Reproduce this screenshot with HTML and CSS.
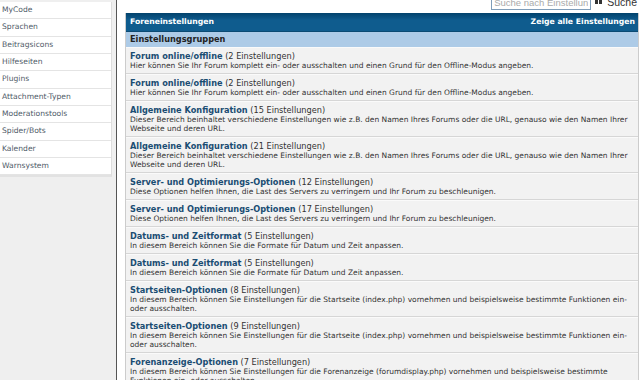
FILE: index.html
```html
<!DOCTYPE html>
<html lang="de">
<head>
    <meta charset="UTF-8">
    <title>Einstellungen</title>
    <link rel="stylesheet" href="styles.css">
</head>
<body>
    <div class="page">
        <!-- Left menu -->
        <div class="sidebar">
            <ul class="nav">
                <li>MyCode</li>
                <li>Sprachen</li>
                <li>Beitragsicons</li>
                <li>Hilfeseiten</li>
                <li>Plugins</li>
                <li>Attachment-Typen</li>
                <li>Moderationstools</li>
                <li>Spider/Bots</li>
                <li>Kalender</li>
                <li>Warnsystem</li>
            </ul>
        </div>

        <!-- Settings -->
        <div class="content">
            <div class="search">
                <input type="text" placeholder="Suche nach Einstellungen">
                <span class="search-btn"><svg width="8" height="6" viewBox="0 0 8 6"><rect x="0" y="1" width="3" height="4" fill="#333"/><rect x="4" y="1" width="3" height="4" fill="#333"/></svg><span>Suche</span></span>
            </div>

            <div class="box">
                <div class="box-head">
                    <span>Foreneinstellungen</span>
                    <span>Zeige alle Einstellungen</span>
                </div>
                <div class="box-sub">Einstellungsgruppen</div>

                <div class="row">
                    <div class="title"><b>Forum online/offline</b> (2 Einstellungen)</div>
                    <div class="desc">Hier können Sie Ihr Forum komplett ein- oder ausschalten und einen Grund für den Offline-Modus angeben.</div>
                </div>
                <div class="row">
                    <div class="title"><b>Forum online/offline</b> (2 Einstellungen)</div>
                    <div class="desc">Hier können Sie Ihr Forum komplett ein- oder ausschalten und einen Grund für den Offline-Modus angeben.</div>
                </div>
                <div class="row">
                    <div class="title"><b>Allgemeine Konfiguration</b> (15 Einstellungen)</div>
                    <div class="desc">Dieser Bereich beinhaltet verschiedene Einstellungen wie z.B. den Namen Ihres Forums oder die URL, genauso wie den Namen Ihrer<br>Webseite und deren URL.</div>
                </div>
                <div class="row">
                    <div class="title"><b>Allgemeine Konfiguration</b> (21 Einstellungen)</div>
                    <div class="desc">Dieser Bereich beinhaltet verschiedene Einstellungen wie z.B. den Namen Ihres Forums oder die URL, genauso wie den Namen Ihrer<br>Webseite und deren URL.</div>
                </div>
                <div class="row">
                    <div class="title"><b>Server- und Optimierungs-Optionen</b> (12 Einstellungen)</div>
                    <div class="desc">Diese Optionen helfen Ihnen, die Last des Servers zu verringern und Ihr Forum zu beschleunigen.</div>
                </div>
                <div class="row">
                    <div class="title"><b>Server- und Optimierungs-Optionen</b> (17 Einstellungen)</div>
                    <div class="desc">Diese Optionen helfen Ihnen, die Last des Servers zu verringern und Ihr Forum zu beschleunigen.</div>
                </div>
                <div class="row">
                    <div class="title"><b>Datums- und Zeitformat</b> (5 Einstellungen)</div>
                    <div class="desc">In diesem Bereich können Sie die Formate für Datum und Zeit anpassen.</div>
                </div>
                <div class="row">
                    <div class="title"><b>Datums- und Zeitformat</b> (5 Einstellungen)</div>
                    <div class="desc">In diesem Bereich können Sie die Formate für Datum und Zeit anpassen.</div>
                </div>
                <div class="row">
                    <div class="title"><b>Startseiten-Optionen</b> (8 Einstellungen)</div>
                    <div class="desc">In diesem Bereich können Sie Einstellungen für die Startseite (index.php) vornehmen und beispielsweise bestimmte Funktionen ein-<br>oder ausschalten.</div>
                </div>
                <div class="row">
                    <div class="title"><b>Startseiten-Optionen</b> (9 Einstellungen)</div>
                    <div class="desc">In diesem Bereich können Sie Einstellungen für die Startseite (index.php) vornehmen und beispielsweise bestimmte Funktionen ein-<br>oder ausschalten.</div>
                </div>
                <div class="row">
                    <div class="title"><b>Forenanzeige-Optionen</b> (7 Einstellungen)</div>
                    <div class="desc">In diesem Bereich können Sie Einstellungen für die Forenanzeige (forumdisplay.php) vornehmen und beispielsweise bestimmte<br>Funktionen ein- oder ausschalten.</div>
                </div>
            </div>
        </div>
    </div>
</body>
</html>
```

FILE: styles.css
```css
body {
    margin: 0;
    padding: 0;
    font-family: "DejaVu Sans", Verdana, sans-serif;
    background-color: #ffffff;
    color: #333;
    overflow: hidden;
}

.page {
    display: flex;
    height: 380px;
    overflow: hidden;
}

.sidebar {
    width: 116px;
    flex-shrink: 0;
    background-color: #efefef;
    border-right: 1px solid #555;
}

.nav {
    list-style: none;
    margin: 2px 4px 0 0;
    padding: 0;
    background-color: #fff;
    border-right: 1px solid #ddd;
    border-bottom: 2px solid #e2e2e2;
}

.nav li {
    height: 16.35px;
    line-height: 16.35px;
    padding-left: 2px;
    font-size: 7.6px;
    color: #4f5b68;
    border-bottom: 1px solid #e4e4e4;
}

.content {
    flex: 1;
    min-width: 0;
    padding: 0 1px 0 8px;
}

.search {
    display: flex;
    justify-content: flex-end;
    align-items: flex-start;
    height: 13px;
    padding-right: 2px;
}

.search input {
    width: 94px;
    height: 14px;
    margin-top: -6px;
    padding: 0 2px;
    border: 1px solid #7f9db9;
    font-family: "Liberation Sans", Arial, sans-serif;
    font-size: 9.5px;
}

.search input::placeholder {
    color: #aaa;
}

.search-btn {
    display: flex;
    align-items: center;
    gap: 4px;
    margin-left: 4px;
    margin-top: -4px;
    font-family: "Liberation Sans", Arial, sans-serif;
    font-size: 10.5px;
    color: #333;
}

.box {
    border: 1px solid #ccc;
    border-top: none;
}

.box-head {
    display: flex;
    justify-content: space-between;
    height: 18px;
    line-height: 18px;
    padding: 0 3px 0 4px;
    background: linear-gradient(#02426c, #0f5c8e 40%, #0f5c8e);
    color: #fff;
    font-weight: bold;
    font-size: 7.7px;
}

.box-sub {
    height: 15px;
    line-height: 15px;
    padding: 0 4px;
    background-color: #adcbe7;
    border-top: 1px solid #0b4a73;
    font-weight: bold;
    font-size: 8.2px;
    color: #222;
}

.row {
    padding: 3px 2px 3px 4px;
    background-color: #f2f2f2;
    border-top: 1px solid #fafafa;
    border-bottom: 1px solid #d6d6d6;
}

.title {
    font-size: 8.2px;
    line-height: 10px;
    color: #333;
}

.title b {
    color: #1a4d72;
}

.desc {
    font-size: 7.5px;
    line-height: 9px;
    color: #333;
    white-space: nowrap;
}
```
